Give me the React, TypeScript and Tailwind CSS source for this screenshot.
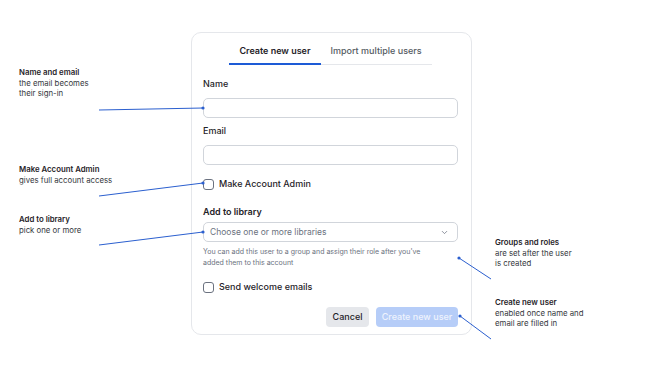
import React, { useState } from 'react';
import { ChevronDown } from 'lucide-react';

type Note = { top: string; left: string; title: string; lines: string[] };

const notes: Note[] = [
  { top: 'top-[67px]', left: 'left-[19px]', title: 'Name and email', lines: ['the email becomes', 'their sign-in'] },
  { top: 'top-[164px]', left: 'left-[19px]', title: 'Make Account Admin', lines: ['gives full account access'] },
  { top: 'top-[214px]', left: 'left-[19px]', title: 'Add to library', lines: ['pick one or more'] },
  { top: 'top-[237px]', left: 'left-[495px]', title: 'Groups and roles', lines: ['are set after the user', 'is created'] },
  { top: 'top-[297px]', left: 'left-[495px]', title: 'Create new user', lines: ['enabled once name and', 'email are filled in'] },
];

// connector lines: [x1, y1, x2, y2], dot sits on the second point
const links = [
  [99, 110, 203, 108],
  [99, 196, 203, 183],
  [99, 245, 203, 232],
  [491, 279, 459, 258],
  [491, 339, 460, 316],
];

function Checkbox({ label }: { label: string }) {
  return (
    <label className="flex items-center gap-[5px] h-[12px]">
      <span className="w-[11px] h-[11px] rounded-[3px] border border-[#6b7280] bg-white" />
      <span className="text-[9px] leading-[12px] font-medium text-[#1f2328]">{label}</span>
    </label>
  );
}

export default function App() {
  const [tab, setTab] = useState('create');

  return (
    <div className="relative w-[670px] h-[370px] bg-white font-['Inter',sans-serif] overflow-hidden">
      <div className="ml-[191px] pt-[32px]">
        <div className="w-[281px] h-[303px] rounded-[10px] border border-[#e5e7eb] bg-white pl-[11px] pr-[13px] pt-[9px] flex flex-col">
          <div className="flex self-center border-b border-[#e5e7eb]">
            <button
              onClick={() => setTab('create')}
              className={`px-[10px] pt-[2px] pb-[5px] text-[9px] leading-[14px] border-b-2 -mb-px ${
                tab === 'create' ? 'border-[#1d5bd6] text-[#1f2328] font-semibold' : 'border-transparent text-[#555b63] font-medium'
              }`}
            >
              Create new user
            </button>
            <button
              onClick={() => setTab('import')}
              className={`px-[10px] pt-[2px] pb-[5px] text-[9px] leading-[14px] border-b-2 -mb-px ${
                tab === 'import' ? 'border-[#1d5bd6] text-[#1f2328] font-semibold' : 'border-transparent text-[#555b63] font-medium'
              }`}
            >
              Import multiple users
            </button>
          </div>

          <div className="mt-[13px] text-[9px] leading-[12px] font-medium text-[#1f2328]">Name</div>
          <div className="mt-[8px] h-[20px] rounded-[5px] border border-[#d1d5db]" />

          <div className="mt-[7px] text-[9px] leading-[12px] font-medium text-[#1f2328]">Email</div>
          <div className="mt-[8px] h-[20px] rounded-[5px] border border-[#d1d5db]" />

          <div className="mt-[13px]">
            <Checkbox label="Make Account Admin" />
          </div>

          <div className="mt-[16px] text-[9px] leading-[12px] font-semibold text-[#1f2328]">Add to library</div>
          <div className="mt-[4px] h-[20px] rounded-[5px] border border-[#d1d5db] flex items-center justify-between pl-[6px] pr-[8px]">
            <span className="text-[8.5px] text-[#6b7280]">Choose one or more libraries</span>
            <ChevronDown className="w-[9px] h-[9px] text-[#6b7280]" strokeWidth={2} />
          </div>
          <p className="mt-[4px] text-[7px] leading-[11px] text-[#6b7280] w-[235px]">
            You can add this user to a group and assign their role after you've added them to this account
          </p>

          <div className="mt-[13px]">
            <Checkbox label="Send welcome emails" />
          </div>

          <div className="mt-[14px] flex justify-end gap-[7px]">
            <button className="h-[20px] w-[43px] rounded-[4px] bg-[#e5e7eb] text-[9px] font-medium text-[#1f2328]">
              Cancel
            </button>
            <button className="h-[20px] w-[82px] rounded-[4px] bg-[#b6cdf8] text-[9px] font-medium text-[#eef3fd]">
              Create new user
            </button>
          </div>
        </div>
      </div>

      {notes.map((n) => (
        <div key={n.title} className={`absolute ${n.top} ${n.left} text-[7.8px] leading-[10.5px] text-[#34383d]`}>
          <div className="font-semibold text-[#1f2328]">{n.title}</div>
          {n.lines.map((l) => (
            <div key={l}>{l}</div>
          ))}
        </div>
      ))}

      <svg className="absolute inset-0 pointer-events-none" width="670" height="370">
        {links.map(([x1, y1, x2, y2], i) => (
          <g key={i}>
            <line x1={x1} y1={y1} x2={x2} y2={y2} stroke="#2b5fcf" strokeWidth="1" />
            <circle cx={x2} cy={y2} r="1.6" fill="#2b5fcf" />
          </g>
        ))}
      </svg>
    </div>
  );
}
